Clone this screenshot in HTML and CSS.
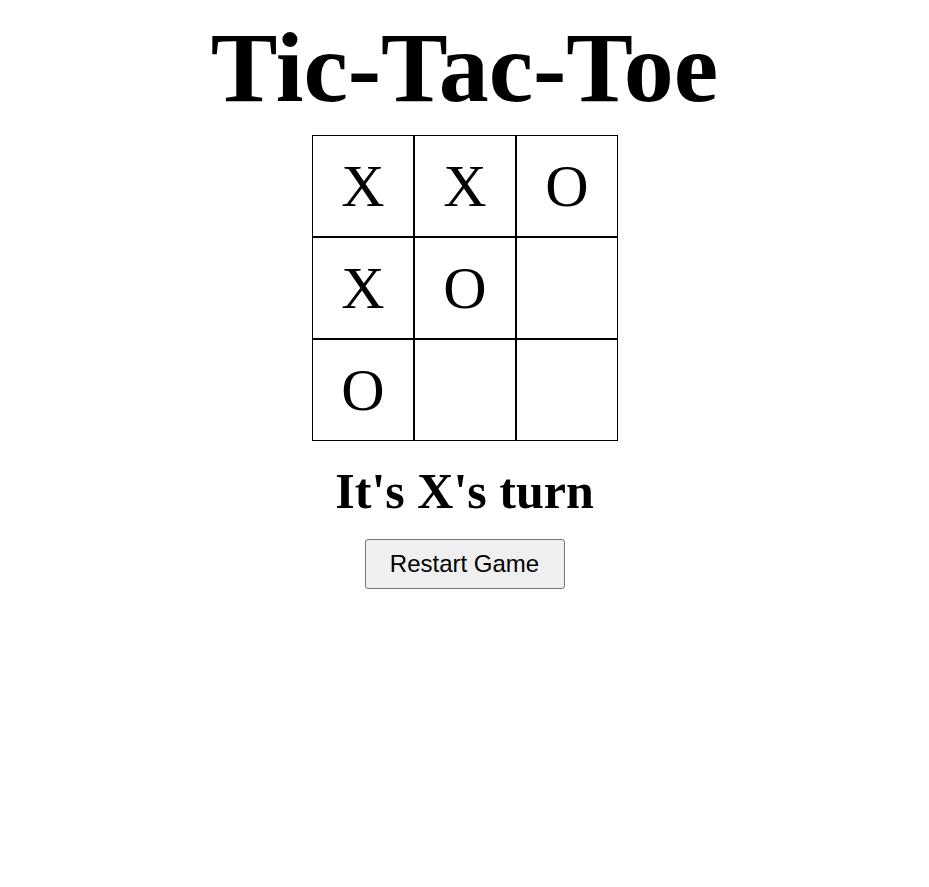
FILE: index.html
```html
<!DOCTYPE html>
<html>
<head>
<meta charset="utf-8">
<link rel="stylesheet" href="styles.css">
</head>
<body>
<div class="app">
  <h1 class="title">Tic-Tac-Toe</h1>
  <div class="board">
    <div class="cell">X</div>
    <div class="cell">X</div>
    <div class="cell">O</div>
    <div class="cell">X</div>
    <div class="cell">O</div>
    <div class="cell"></div>
    <div class="cell">O</div>
    <div class="cell"></div>
    <div class="cell"></div>
  </div>
  <h2 class="status">It's X's turn</h2>
  <button class="restart">Restart Game</button>
</div>
</body>
</html>
```
FILE: styles.css
```css
html, body {
  margin: 0;
  padding: 0;
  background: #ffffff;
}
body {
  padding: 8px;
  font-family: "Liberation Serif", "Times New Roman", serif;
  color: #000;
}
.app {
  display: flex;
  flex-direction: column;
  align-items: center;
}
.title {
  margin: 2px 0 10px;
  font-size: 100px;
  font-weight: bold;
  line-height: 115px;
}
.board {
  display: grid;
  grid-template-columns: repeat(3, 102px);
  grid-template-rows: repeat(3, 102px);
  margin-left: 1px;
}
.cell {
  border: 1px solid #000;
  display: flex;
  align-items: center;
  justify-content: center;
  font-size: 60px;
}
.status {
  margin: 21px 0 19px;
  font-size: 50px;
  font-weight: bold;
  line-height: 58px;
}
.restart {
  font-family: "Liberation Sans", Arial, sans-serif;
  font-size: 24px;
  padding: 10px 20px;
  background: #efefef;
  border: 1px solid #767676;
  border-radius: 3px;
  color: #000;
  width: 200px;
  height: 50px;
}
```
